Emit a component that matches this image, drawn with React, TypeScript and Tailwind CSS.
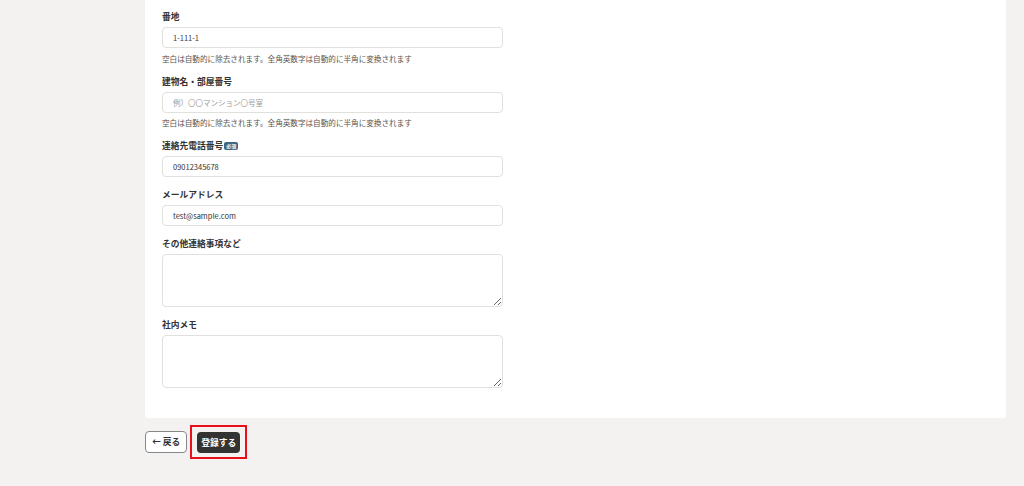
import React from 'react';

const font = { fontFamily: '"Noto Sans CJK JP", "Noto Sans", sans-serif' };

const helpText = '空白は自動的に除去されます。全角英数字は自動的に半角に変換されます';

interface FieldProps {
  label: string;
  required?: boolean;
  help?: boolean;
  children: React.ReactNode;
}

const Field: React.FC<FieldProps> = ({ label, required, help, children }) => (
  <div className="mb-[11px]">
    <div className="flex items-center h-[14px] mb-[3px]">
      <span className="text-[8.75px] leading-[14px] font-bold text-[#333]">{label}</span>
      {required && (
        <span className="ml-[1px] h-[8px] px-[2px] rounded-[2px] bg-[#3e6782] text-white text-[5px] leading-[8px] font-bold">
          必須
        </span>
      )}
    </div>
    {children}
    {help && (
      <p className="mt-[5.5px] text-[7.6px] leading-[10px] text-[#555]">{helpText}</p>
    )}
  </div>
);

const inputCls =
  'block w-[341px] h-[21px] px-[10px] rounded-[4px] border border-[#e0e0dc] bg-white text-[7.5px] text-[#333] placeholder:text-[#999] outline-none';

const textareaCls =
  'block w-[341px] h-[53px] px-[10px] py-[6px] rounded-[4px] border border-[#e0e0dc] bg-white text-[7.5px] text-[#333] outline-none';

export default function App() {
  return (
    <div className="min-h-screen bg-[#f3f2f0]" style={font}>
      <div className="ml-[145px] w-[861px]">
        {/* Form card */}
        <div className="bg-white rounded-b-[3px] pl-[17px] pt-[10px] pb-[19px]">
          <Field label="番地" help>
            <input className={inputCls} defaultValue="1-111-1" />
          </Field>
          <Field label="建物名・部屋番号" help>
            <input className={inputCls} placeholder="例）〇〇マンション〇号室" />
          </Field>
          <Field label="連絡先電話番号" required>
            <input className={inputCls} defaultValue="09012345678" />
          </Field>
          <Field label="メールアドレス">
            <input className={inputCls} defaultValue="test@sample.com" />
          </Field>
          <Field label="その他連絡事項など">
            <textarea className={textareaCls} />
          </Field>
          <Field label="社内メモ">
            <textarea className={textareaCls} />
          </Field>
        </div>

        {/* Actions */}
        <div className="flex items-center mt-[7px] gap-[3px]">
          <button className="h-[22px] px-[6px] rounded-[4px] border border-[#888] bg-white text-[8.75px] font-bold text-[#333]">
            ← 戻る
          </button>
          <div className="flex border-2 border-[#e8101a] pt-[5px] pb-[4px] px-[5px]">
            <button className="h-[21px] px-[4px] rounded-[4px] bg-[#333] text-[8.75px] font-bold text-white">
              登録する
            </button>
          </div>
        </div>
      </div>
    </div>
  );
}
